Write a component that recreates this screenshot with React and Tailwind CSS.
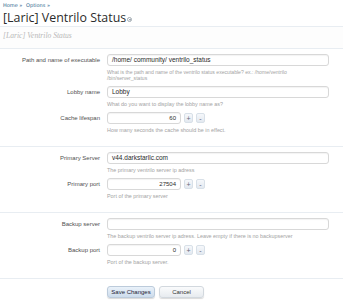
import React from 'react'

// small +/- spinner buttons
function SpinBtn({ children }) {
  return (
    <button className="w-[9px] h-[10px] rounded-[2px] border border-[#d8e0e8] bg-gradient-to-b from-[#f6f8fb] to-[#e3e9f0] text-[7px] leading-none text-[#667] flex items-center justify-center">
      {children}
    </button>
  )
}

function Row({ label, children, help }) {
  return (
    <div className="flex items-start">
      <div className="w-[100px] shrink-0 text-right text-[6px] leading-[12px] text-[#505050]">
        {label}
      </div>
      <div className="ml-[7px] flex-1">
        {children}
        {help && (
          <div className="mt-[3px] text-[5.4px] leading-[6px] text-[#a3a3a3]">
            {help}
          </div>
        )}
      </div>
    </div>
  )
}

function TextInput({ value = '' }) {
  return (
    <div className="w-[222px] h-[12px] rounded-[3px] border border-[#d8d8d8] bg-white shadow-[inset_0_1px_1px_rgba(0,0,0,0.05)] px-[4px] text-[6.5px] leading-[10px] text-[#2a2a2a]">
      {value}
    </div>
  )
}

function NumInput({ value }) {
  return (
    <div className="flex items-center gap-[3px]">
      <div className="w-[74px] h-[12px] rounded-[3px] border border-[#d8d8d8] bg-white shadow-[inset_0_1px_1px_rgba(0,0,0,0.05)] px-[4px] text-right text-[6px] leading-[10px] text-[#2a2a2a]">
        {value}
      </div>
      <SpinBtn>+</SpinBtn>
      <SpinBtn>-</SpinBtn>
    </div>
  )
}

export default function App() {
  return (
    <div className="w-[343px] h-[300px] bg-white overflow-hidden font-['Liberation_Sans',sans-serif]">
      {/* header */}
      <div className="px-[3px] pt-[2px] h-[26px]">
        <div className="text-[5px] leading-[6px] text-[#2c5f8a] font-['DejaVu_Sans',sans-serif]">
          Home » <span className="ml-[2px]">Options »</span>
        </div>
        <div className="flex items-center mt-[2px]">
          <h1 className="text-[12.4px] leading-[16px] text-[#2b2b2b] font-['Open_Sans',sans-serif]">
            [Laric] Ventrilo Status
          </h1>
          <span className="ml-[1px] mt-[3px] w-[5px] h-[5px] rounded-full border border-[#a0aab0] flex items-center justify-center">
            <span className="block w-0 h-0 border-l-[1.5px] border-r-[1.5px] border-t-[2px] border-l-transparent border-r-transparent border-t-[#8890a0]" />
          </span>
        </div>
      </div>
      <div className="border-t border-[#e8edf2] h-[22px] px-[3px] pb-[3px] flex items-center bg-[#fdfdfd]">
        <span className="italic text-[7.6px] text-[#b8b8b8] font-['Liberation_Serif',serif]">
          [Laric] Ventrilo Status
        </span>
      </div>

      <div className="border-t border-[#e8edf2] pt-[5px] pb-[13px] flex flex-col gap-[5px]">
        <Row
          label="Path and name of executable"
          help={
            <span className="block whitespace-nowrap text-[5.1px]">
              What is the path and name of the ventrilo status executable? ex.: /home/ventrilo
              <br />
              /bin/server_status
            </span>
          }
        >
          <TextInput value="/home/ community/ ventrilo_status" />
        </Row>
        <Row label="Lobby name" help="What do you want to display the lobby name as?">
          <TextInput value="Lobby" />
        </Row>
        <Row label="Cache lifespan" help="How many seconds the cache should be in effect.">
          <NumInput value="60" />
        </Row>
      </div>

      <div className="border-t border-[#e8edf2] pt-[5px] pb-[13px] flex flex-col gap-[5px]">
        <Row label="Primary Server" help="The primary ventrilo server ip adress">
          <TextInput value="v44.darkstarllc.com" />
        </Row>
        <Row label="Primary port" help="Port of the primary server">
          <NumInput value="27504" />
        </Row>
      </div>

      <div className="border-t border-[#e8edf2] pt-[5px] pb-[13px] flex flex-col gap-[5px]">
        <Row
          label="Backup server"
          help="The backup ventrilo server ip adress. Leave empty if there is no backupserver"
        >
          <TextInput />
        </Row>
        <Row label="Backup port" help="Port of the backup server.">
          <NumInput value="0" />
        </Row>
      </div>

      <div className="border-t border-[#e8edf2] pt-[7px] pl-[107px] flex gap-[4px]">
        <button className="w-[48px] h-[12px] rounded-[3px] border border-[#bccbdb] bg-gradient-to-b from-[#eaf2fa] to-[#cddcec] shadow-[0_1px_1px_rgba(0,0,0,0.15)] text-[6px] leading-none text-[#223]">
          Save Changes
        </button>
        <button className="w-[45px] h-[12px] rounded-[3px] border border-[#d2d8de] bg-gradient-to-b from-[#fafbfc] to-[#e7ebef] shadow-[0_1px_1px_rgba(0,0,0,0.15)] text-[6px] leading-none text-[#333]">
          Cancel
        </button>
      </div>
    </div>
  )
}
